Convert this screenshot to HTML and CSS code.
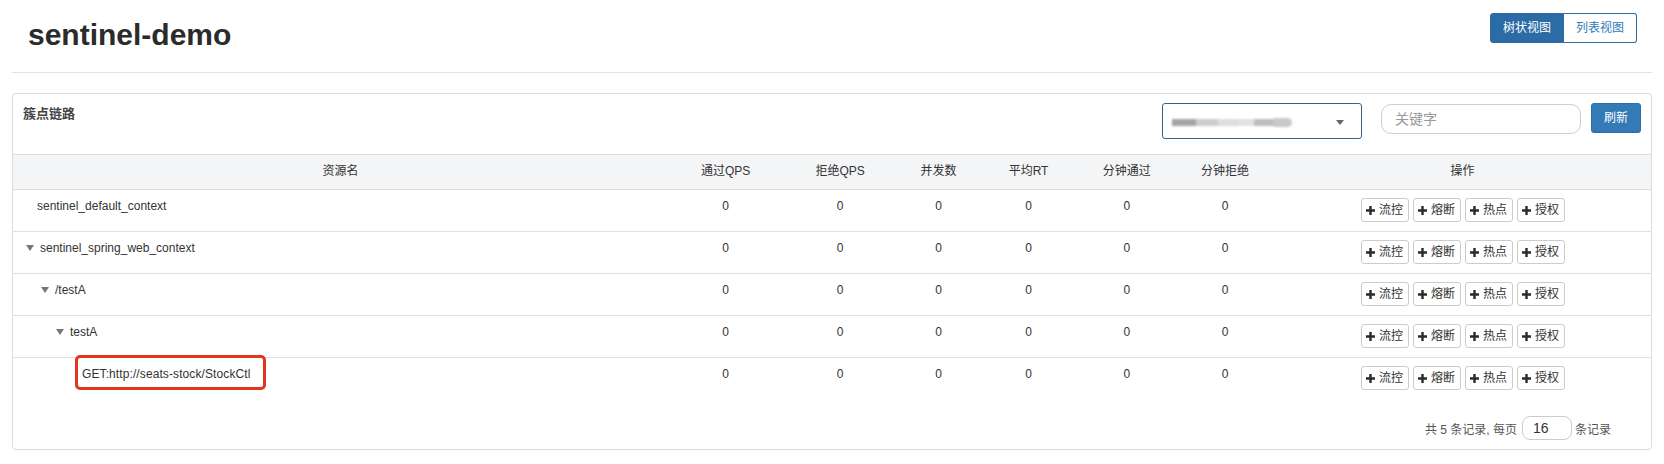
FILE: index.html
```html
<!DOCTYPE html>
<html lang="zh-CN">
<head>
<meta charset="utf-8">
<title>sentinel-demo</title>
<link rel="stylesheet" href="styles.css">
</head>
<body>
<div class="page">
  <div class="top">
    <h1 class="title">sentinel-demo</h1>
    <div class="view-toggle">
      <span class="vt-btn active">树状视图</span>
      <span class="vt-btn plain">列表视图</span>
    </div>
  </div>
  <div class="divider"></div>

  <div class="panel">
    <div class="panel-head">
      <div class="panel-title">簇点链路</div>
      <div class="select">
        <span class="blur">
          <span class="b1"></span><span class="b2"></span><span class="b3"></span><span class="b4"></span><span class="b5"></span><span class="b6"></span>
        </span>
        <span class="caret"></span>
      </div>
      <input class="search" type="text" placeholder="关键字">
      <span class="refresh">刷新</span>
    </div>

    <table class="grid">
      <colgroup>
        <col class="c40"><col class="c7"><col class="c7"><col class="c5"><col class="c6"><col class="c6"><col class="c6"><col class="c23">
      </colgroup>
      <thead>
        <tr>
          <th>资源名</th><th>通过QPS</th><th>拒绝QPS</th><th>并发数</th><th>平均RT</th><th>分钟通过</th><th>分钟拒绝</th><th>操作</th>
        </tr>
      </thead>
      <tbody>
        <tr>
          <td class="name"><span class="leaf"></span>sentinel_default_context</td>
          <td>0</td><td>0</td><td>0</td><td>0</td><td>0</td><td>0</td>
          <td><div class="ops"><span class="op"><svg viewBox="0 0 9 9"><path d="M3.3 0h2.4v3.3H9v2.4H5.7V9H3.3V5.7H0V3.3h3.3z"/></svg>流控</span><span class="op"><svg viewBox="0 0 9 9"><path d="M3.3 0h2.4v3.3H9v2.4H5.7V9H3.3V5.7H0V3.3h3.3z"/></svg>熔断</span><span class="op"><svg viewBox="0 0 9 9"><path d="M3.3 0h2.4v3.3H9v2.4H5.7V9H3.3V5.7H0V3.3h3.3z"/></svg>热点</span><span class="op"><svg viewBox="0 0 9 9"><path d="M3.3 0h2.4v3.3H9v2.4H5.7V9H3.3V5.7H0V3.3h3.3z"/></svg>授权</span></div></td>
        </tr>
        <tr>
          <td class="name"><span class="tri"></span>sentinel_spring_web_context</td>
          <td>0</td><td>0</td><td>0</td><td>0</td><td>0</td><td>0</td>
          <td><div class="ops"><span class="op"><svg viewBox="0 0 9 9"><path d="M3.3 0h2.4v3.3H9v2.4H5.7V9H3.3V5.7H0V3.3h3.3z"/></svg>流控</span><span class="op"><svg viewBox="0 0 9 9"><path d="M3.3 0h2.4v3.3H9v2.4H5.7V9H3.3V5.7H0V3.3h3.3z"/></svg>熔断</span><span class="op"><svg viewBox="0 0 9 9"><path d="M3.3 0h2.4v3.3H9v2.4H5.7V9H3.3V5.7H0V3.3h3.3z"/></svg>热点</span><span class="op"><svg viewBox="0 0 9 9"><path d="M3.3 0h2.4v3.3H9v2.4H5.7V9H3.3V5.7H0V3.3h3.3z"/></svg>授权</span></div></td>
        </tr>
        <tr>
          <td class="name" style="padding-left:23px"><span class="tri"></span>/testA</td>
          <td>0</td><td>0</td><td>0</td><td>0</td><td>0</td><td>0</td>
          <td><div class="ops"><span class="op"><svg viewBox="0 0 9 9"><path d="M3.3 0h2.4v3.3H9v2.4H5.7V9H3.3V5.7H0V3.3h3.3z"/></svg>流控</span><span class="op"><svg viewBox="0 0 9 9"><path d="M3.3 0h2.4v3.3H9v2.4H5.7V9H3.3V5.7H0V3.3h3.3z"/></svg>熔断</span><span class="op"><svg viewBox="0 0 9 9"><path d="M3.3 0h2.4v3.3H9v2.4H5.7V9H3.3V5.7H0V3.3h3.3z"/></svg>热点</span><span class="op"><svg viewBox="0 0 9 9"><path d="M3.3 0h2.4v3.3H9v2.4H5.7V9H3.3V5.7H0V3.3h3.3z"/></svg>授权</span></div></td>
        </tr>
        <tr>
          <td class="name" style="padding-left:38px"><span class="tri"></span>testA</td>
          <td>0</td><td>0</td><td>0</td><td>0</td><td>0</td><td>0</td>
          <td><div class="ops"><span class="op"><svg viewBox="0 0 9 9"><path d="M3.3 0h2.4v3.3H9v2.4H5.7V9H3.3V5.7H0V3.3h3.3z"/></svg>流控</span><span class="op"><svg viewBox="0 0 9 9"><path d="M3.3 0h2.4v3.3H9v2.4H5.7V9H3.3V5.7H0V3.3h3.3z"/></svg>熔断</span><span class="op"><svg viewBox="0 0 9 9"><path d="M3.3 0h2.4v3.3H9v2.4H5.7V9H3.3V5.7H0V3.3h3.3z"/></svg>热点</span><span class="op"><svg viewBox="0 0 9 9"><path d="M3.3 0h2.4v3.3H9v2.4H5.7V9H3.3V5.7H0V3.3h3.3z"/></svg>授权</span></div></td>
        </tr>
        <tr>
          <td class="name" style="padding-left:53px"><span class="leaf"></span><span class="highlight">GET:http://seats-stock/StockCtl</span></td>
          <td>0</td><td>0</td><td>0</td><td>0</td><td>0</td><td>0</td>
          <td><div class="ops"><span class="op"><svg viewBox="0 0 9 9"><path d="M3.3 0h2.4v3.3H9v2.4H5.7V9H3.3V5.7H0V3.3h3.3z"/></svg>流控</span><span class="op"><svg viewBox="0 0 9 9"><path d="M3.3 0h2.4v3.3H9v2.4H5.7V9H3.3V5.7H0V3.3h3.3z"/></svg>熔断</span><span class="op"><svg viewBox="0 0 9 9"><path d="M3.3 0h2.4v3.3H9v2.4H5.7V9H3.3V5.7H0V3.3h3.3z"/></svg>热点</span><span class="op"><svg viewBox="0 0 9 9"><path d="M3.3 0h2.4v3.3H9v2.4H5.7V9H3.3V5.7H0V3.3h3.3z"/></svg>授权</span></div></td>
        </tr>
      </tbody>
    </table>

    <div class="pager">
      <span class="pager-text">共 5 条记录, 每页</span>
      <input class="page-size" type="text" value="16">
      <span class="pager-text">条记录</span>
    </div>
  </div>
</div>
</body>
</html>
```

FILE: styles.css
```css
* { box-sizing: border-box; }

body {
  margin: 0;
  background: #fff;
  color: #333;
  font-family: "Liberation Sans", "Noto Sans CJK SC", sans-serif;
  font-size: 12px;
}

.page {
  padding: 0 12px;
}

.top {
  display: flex;
  justify-content: space-between;
  align-items: flex-start;
  height: 72px;
  padding: 0 15px 0 16px;
}

.title {
  margin: 17px 0 0;
  font-size: 30px;
  line-height: 36px;
  font-weight: bold;
  color: #2b2b2b;
}

.view-toggle {
  display: flex;
  margin-top: 13px;
}

.vt-btn {
  display: block;
  height: 30px;
  font-size: 12px;
  line-height: 28px;
  text-align: center;
  border: 1px solid #2e6da4;
}

.vt-btn.active {
  width: 74px;
  background: #2c6ca6;
  color: #fff;
  border-radius: 3px 0 0 3px;
}

.vt-btn.plain {
  width: 73px;
  background: #fff;
  color: #337ab7;
  border-left: none;
  border-radius: 0 3px 3px 0;
}

.divider {
  border-top: 1px solid #e3e3e3;
}

.panel {
  margin-top: 20px;
  border: 1px solid #dcdcdc;
  border-radius: 4px;
}

.panel-head {
  display: flex;
  align-items: flex-start;
  height: 60px;
  padding: 9px 10px 0 10px;
}

.panel-title {
  flex: 1;
  margin-top: 2px;
  font-size: 13px;
  line-height: 18px;
  font-weight: bold;
  color: #444;
}

.select {
  display: flex;
  align-items: center;
  justify-content: space-between;
  width: 200px;
  height: 36px;
  padding: 3px 17px 0 9px;
  border: 1px solid #3d6186;
  border-radius: 3px;
  background: #fff;
}

.blur {
  display: flex;
  align-items: center;
  height: 9px;
  filter: blur(1.1px);
}

.blur span {
  display: block;
  height: 7px;
}

.blur .b1 { width: 24px; background: #a4a4a4; }
.blur .b2 { width: 22px; background: #cdcdcd; }
.blur .b3 { width: 20px; background: #dedede; }
.blur .b4 { width: 16px; background: #e2e2e2; }
.blur .b5 { width: 20px; background: #bdbdbd; }
.blur .b6 { width: 18px; height: 9px; background: #c9c9c9; border-radius: 0 5px 5px 0; }

.caret {
  width: 0;
  height: 0;
  border-left: 4.5px solid transparent;
  border-right: 4.5px solid transparent;
  border-top: 5px solid #666;
}

.search {
  width: 200px;
  height: 30px;
  margin: 1px 0 0 19px;
  padding: 0 13px;
  border: 1px solid #cfcfcf;
  border-radius: 10px;
  font-family: inherit;
  font-size: 14px;
  color: #333;
  outline: none;
}

.search::placeholder {
  color: #999;
}

.refresh {
  display: block;
  width: 50px;
  height: 30px;
  margin-left: 10px;
  border: 1px solid #2e6da4;
  border-radius: 3px;
  background: #337ab7;
  color: #fff;
  font-size: 12px;
  line-height: 28px;
  text-align: center;
}

.grid {
  width: 100%;
  border-collapse: collapse;
  table-layout: fixed;
}

.c40 { width: 40%; }
.c7 { width: 7%; }
.c5 { width: 5%; }
.c6 { width: 6%; }
.c23 { width: 23%; }

.grid th {
  padding: 8px 8px 9px;
  background: #f4f5f7;
  border-top: 1px solid #dedede;
  border-bottom: 1px solid #dedede;
  font-size: 12px;
  line-height: 17px;
  font-weight: normal;
  color: #333;
  text-align: center;
}

.grid td {
  padding: 8px 8px 9px;
  border-bottom: 1px solid #e0e0e0;
  font-size: 12px;
  line-height: 17px;
  color: #333;
  text-align: center;
  vertical-align: top;
}

.grid tbody tr:last-child td {
  border-bottom: none;
}

.grid td.name {
  text-align: left;
}

.tri {
  display: inline-block;
  width: 0;
  height: 0;
  margin: 0 6px 1px 5px;
  border-left: 4px solid transparent;
  border-right: 4px solid transparent;
  border-top: 6px solid #777;
  vertical-align: middle;
}

.leaf {
  display: inline-block;
  width: 16px;
}

.highlight {
  position: relative;
  display: inline-block;
  letter-spacing: 0.1px;
}

.highlight::after {
  content: "";
  position: absolute;
  top: -11px;
  bottom: -7px;
  left: -7px;
  right: -15px;
  border: 3px solid #e2351f;
  border-radius: 5px;
}

.ops {
  display: flex;
  justify-content: center;
  gap: 4px;
}

.op {
  display: flex;
  align-items: center;
  justify-content: center;
  gap: 4px;
  width: 48px;
  height: 24px;
  border: 1px solid #ccc;
  border-radius: 3px;
  background: #fff;
  font-size: 12px;
  color: #333;
}

.op svg {
  width: 9px;
  height: 9px;
  fill: #2a2a2a;
}

.pager {
  display: flex;
  justify-content: flex-end;
  align-items: center;
  padding: 17px 40px 9px 0;
}

.pager-text {
  font-size: 12px;
  color: #555;
}

.page-size {
  width: 50px;
  height: 24px;
  margin: 0 3px 0 5px;
  padding: 0 0 0 10px;
  border: 1px solid #ccc;
  border-radius: 8px;
  font-family: inherit;
  font-size: 14px;
  color: #333;
  outline: none;
}
```
